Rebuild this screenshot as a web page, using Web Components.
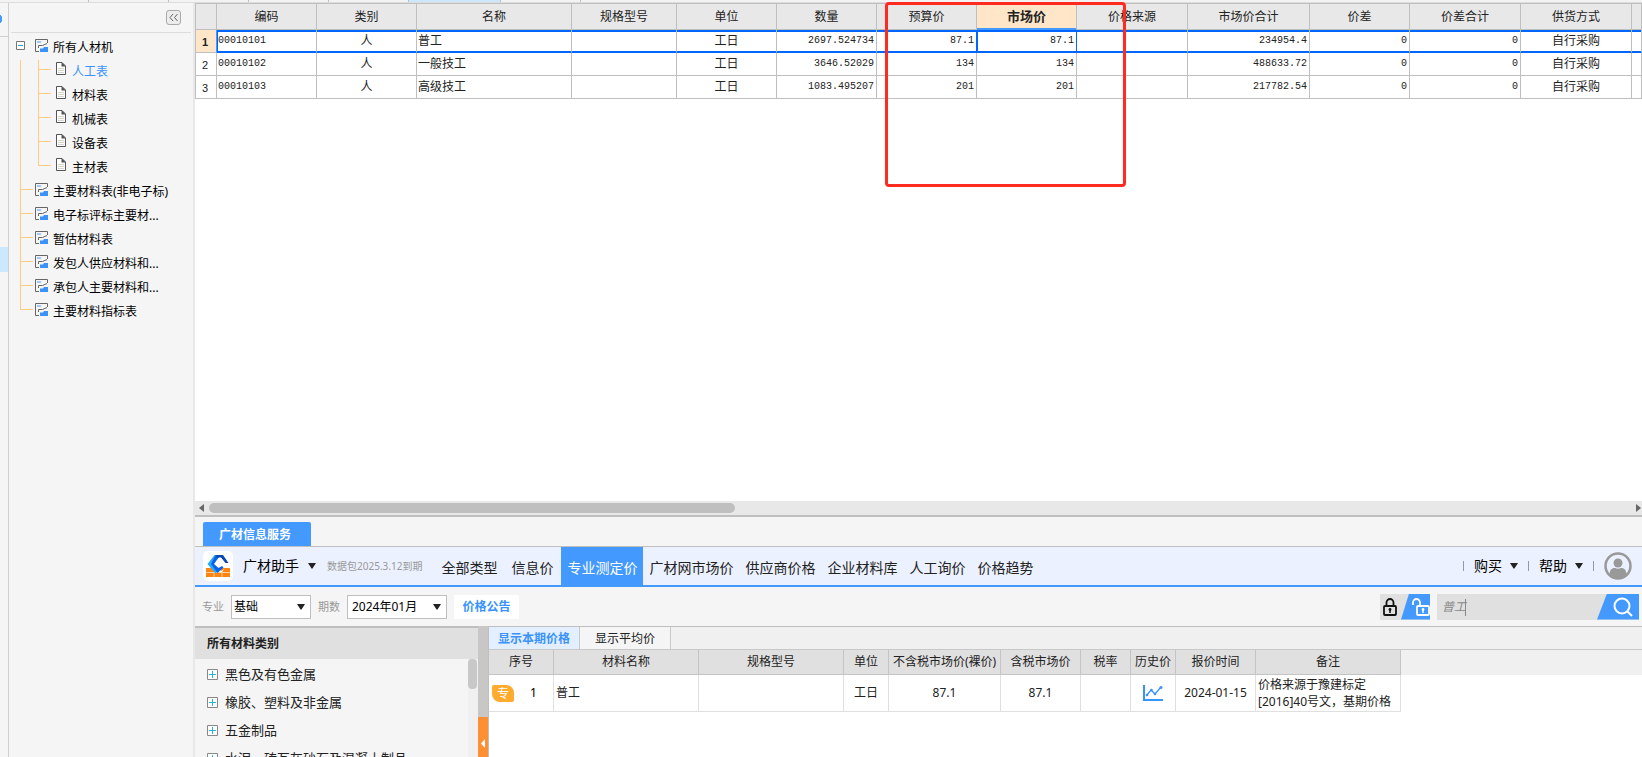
<!DOCTYPE html>
<html lang="zh-CN">
<head>
<meta charset="utf-8">
<title>人材机汇总</title>
<style>
  html, body { margin: 0; height: 100%; }
  body {
    font: 12px/16px "Noto Sans", "Noto Sans CJK SC", sans-serif;
    color: #222;
    background: #f5f5f5;
    overflow: hidden;
  }
</style>
</head>
<body>
<cost-app></cost-app>

<script>
const BASE = `
  * { box-sizing: border-box; }
  button, select, input { font: inherit; color: inherit; margin: 0; border: 0; padding: 0; background: none; border-radius: 0; }
  button { cursor: pointer; }
  svg { display: block; flex: none; }
`;

function define(name, render) {
  customElements.define(name, class extends HTMLElement {
    constructor() {
      super();
      this.attachShadow({ mode: 'open' });
    }
    connectedCallback() {
      const tpl = document.createElement('template');
      const { css, html } = render(this);
      tpl.innerHTML = `<style>${BASE}${css}</style>${html}`;
      this.shadowRoot.replaceChildren(tpl.content.cloneNode(true));
    }
  });
}

/* Strip of window tabs along the upper edge */
define('tab-strip', () => ({
  css: `
    :host { display: flex; height: 3px; background: #f3f3f3; border-bottom: 1px solid #dcdcdc; }
    i { width: 80px; border-right: 1px solid #bfbfbf; }
    i.first { width: 89px; }
    i.on { width: 92px; background: #cce8ff; }
  `,
  html: `<i class="first"></i><i></i><i></i><i></i><i></i><i class="on"></i><i></i>`
}));

/* Narrow rail at the far left */
define('side-rail', () => ({
  css: `
    :host { display: flex; flex-direction: column; width: 9px; flex: none; border-right: 1px solid #cfcfcf; background: #f5f5f5; }
    .top { height: 34px; border-bottom: 1px solid #cfcfcf; display: flex; align-items: center; }
    .top svg { margin-top: -2px; }
    .mark { margin-top: 210px; height: 25px; background: #cce8ff; }
  `,
  html: `<div class="top"><svg width="2" height="10" viewBox="0 0 2 10"><path d="M0 1a5 5 0 0 1 0 8z" fill="#49f" stroke="#49f"/></svg></div><div class="mark"></div>`
}));

/* Tree of price tables */
define('tree-node', host => {
  const level = host.getAttribute('level');
  const chart = `<svg width="13" height="13" viewBox="0 0 13 13">
    <path d="M12.5 4V.5H.5v12H4" fill="none" stroke="#666"/>
    <path d="M2 2h4v2H2z" fill="#9cc8ff"/>
    <path d="M3.500 9V6.500h4L12 4.500" fill="none" stroke="#666"/>
    <path d="M5 9.500h3l1-1.500h4v5H5z" fill="#3a93fb"/></svg>`;
  const file = `<svg width="10" height="13" viewBox="0 0 10 13">
    <path d="M.5.5h5.500l3.500 3.500v8.500H.5z" fill="#fff" stroke="#555"/>
    <path d="M5.500 0L10 4.500H5.500z" fill="#555"/><path d="M2 6.500h6M2 8.500h6M2 10.500h6" stroke="#d4d4d4"/></svg>`;
  return {
    css: `
      :host { display: flex; align-items: center; height: 24px; color: #000; --line: #ffcc80; }
      :host([active]) { color: #3a93fb; }
      .lead { align-self: stretch; flex: none; position: relative; }
      .l0 { width: 26px; display: flex; align-items: center; padding: 0 0 6px 7px; }
      .l1 { width: 26px; }
      .l2 { width: 47px; }
      .v, .h { position: absolute; background: var(--line); }
      .v { width: 1px; left: 11px; top: 0; bottom: 0; }
      .h { height: 1px; left: 11px; width: 13px; top: 9px; }
      .l2 .v + .v, .l2 .h { left: 29px; }
      :host([last]) .v:nth-last-of-type(2) { bottom: auto; height: 9px; }
      .icon { margin-bottom: 6px; }
      .l2 + .icon { margin-bottom: 8px; }
      a { color: inherit; text-decoration: none; margin-left: 5px; white-space: nowrap; }
      .l2 ~ a { margin-left: 6px; }
    `,
    html: `<span class="lead l${level}">${
      level === '0' ? `<svg width="9" height="9" viewBox="0 0 9 9"><path d="M.5.5h8v8h-8z" fill="#fff" stroke="#777"/><path d="M2 4.500h5" stroke="#29a6d6"/></svg>`
      : level === '1' ? `<b class="v"></b><b class="h"></b>`
      : `<b class="v"></b><b class="v"></b><b class="h"></b>`
    }</span><span class="icon">${level === '2' ? file : chart}</span><a href="#"><slot></slot></a>`
  };
});

define('tree-panel', () => ({
  css: `
    :host { display: flex; flex-direction: column; width: 186px; flex: none; background: #f5f5f5; border-right: 2px solid #e8e8e8; }
    header { display: flex; justify-content: flex-end; align-items: center; height: 30px; margin: 0 2px; padding-right: 10px; border-bottom: 1px solid #dcdcdc; }
    button { width: 15px; height: 15px; border: 1px solid #aaa; border-radius: 3px; background: #ececec; display: grid; place-items: center; }
    nav { padding-top: 3px; }
  `,
  html: `<header><button aria-label="收起"><svg width="11" height="9" viewBox="0 0 11 9"><path d="M5 1L2 4.500L5 8M9.500 1l-3 3.500l3 3.500" fill="none" stroke="#666"/></svg></button></header>
  <nav>
    <tree-node level="0">所有人材机</tree-node>
    <tree-node level="2" active>人工表</tree-node>
    <tree-node level="2">材料表</tree-node>
    <tree-node level="2">机械表</tree-node>
    <tree-node level="2">设备表</tree-node>
    <tree-node level="2" last>主材表</tree-node>
    <tree-node level="1">主要材料表(非电子标)</tree-node>
    <tree-node level="1">电子标评标主要材...</tree-node>
    <tree-node level="1">暂估材料表</tree-node>
    <tree-node level="1">发包人供应材料和...</tree-node>
    <tree-node level="1">承包人主要材料和...</tree-node>
    <tree-node level="1" last>主要材料指标表</tree-node>
  </nav>`
}));

/* Main price grid */
const GRID_COLS = [['', 21], ['编码', 100], ['类别', 100], ['名称', 155], ['规格型号', 105], ['单位', 100], ['数量', 100], ['预算价', 100], ['市场价', 100], ['价格来源', 111], ['市场价合计', 122], ['价差', 100], ['价差合计', 111], ['供货方式', 111]];
const GRID_ROWS = [
  ['1', '00010101', '人', '普工', '', '工日', '2697.524734', '87.1', '87.1', '', '234954.4', '0', '0', '自行采购'],
  ['2', '00010102', '人', '一般技工', '', '工日', '3646.52029', '134', '134', '', '488633.72', '0', '0', '自行采购'],
  ['3', '00010103', '人', '高级技工', '', '工日', '1083.495207', '201', '201', '', '217782.54', '0', '0', '自行采购']
];
const GRID_KIND = ['n', 'code', '', 'left', '', '', 'num', 'num', 'num', '', 'num', 'num', 'num', ''];

define('price-grid', () => ({
  css: `
    :host { display: block; flex: 1; min-height: 0; overflow: hidden; background: #fff; border-top: 1px solid #bfbfbf;
      font-family: "Noto Sans CJK SC", sans-serif; }
    table { table-layout: fixed; width: 100%; border-collapse: separate; border-spacing: 0; border-left: 1px solid #bfbfbf; }
    th, td { padding: 0 2px; border: 1px solid #bfbfbf; border-width: 0 1px 1px 0; text-align: center; font-weight: 400; white-space: nowrap; line-height: 16px; overflow: hidden; }
    thead th { height: 26px; background: #e8e8e8; padding-bottom: 2px; }
    tbody th, td { height: 23px; padding-bottom: 2px; }
    td.num, td.code { font: 10px/16px "Liberation Mono", monospace; padding-bottom: 0; }
    td.num { text-align: right; }
    td.code, td.left { text-align: left; padding-left: 1px; }
    tbody th { font: 11px/16px "Liberation Sans", sans-serif; padding: 2px 2px 0 0; }
    thead th.sel { background: #ffe6c8; font-weight: 700; font-size: 13px; box-shadow: inset 0 -1px #49f; border-bottom-color: #49f; }
    tr.sel { --b: #0066ff; }
    tr.sel th { background: #ffe6c8; font-weight: 700; border-right-color: #49f; }
    tr.sel td { border-bottom-color: var(--b); box-shadow: inset 0 2px var(--b), inset 0 -1px var(--b); }
    tr.sel .code, tr.sel .c8 { box-shadow: inset 0 2px var(--b), inset 0 -1px var(--b), inset 1px 0 var(--b); }
    tr.sel .c7, tr.sel .c8 { border-right-color: var(--b); }
  `,
  html: `<table>
    <colgroup>${GRID_COLS.map(c => `<col style="width:${c[1]}px">`).join('')}<col></colgroup>
    <thead><tr>${GRID_COLS.map((c, i) => `<th scope="col" class="${i === 8 ? 'sel' : ''}">${c[0]}</th>`).join('')}<th></th></tr></thead>
    <tbody>${GRID_ROWS.map((r, n) => `<tr class="${n ? '' : 'sel'}">${r.map((v, i) =>
      i ? `<td class="${GRID_KIND[i]} c${i}">${v}</td>` : `<th scope="row">${v}</th>`).join('')}<td></td></tr>`).join('')}</tbody>
  </table>`
}));

define('scroll-track', () => ({
  css: `
    :host { display: flex; align-items: center; height: 16px; flex: none; background: #e8e8e8; border-bottom: 2px solid #bfbfbf; padding: 0 1px 0 4px; }
    .track { flex: 1; margin: 0 5px; }
    .thumb { width: 37%; height: 10px; border-radius: 5px; background: #bfbfbf; }
  `,
  html: `<svg width="5" height="8" viewBox="0 0 5 8"><path d="M5 0v8L0 4z" fill="#666"/></svg><div class="track"><div class="thumb"></div></div><svg width="5" height="8" viewBox="0 0 5 8"><path d="M0 0v8l5-4z" fill="#666"/></svg>`
}));

const CARET = `<svg class="caret" width="8" height="6" viewBox="0 0 8 6"><path d="M0 0h8L4.500 5.500h-1z" fill="#222"/></svg>`;

/* Brand and navigation bar */
define('service-nav', () => ({
  css: `
    :host { display: flex; align-items: center; height: 40px; background: #ebf1ff; border-bottom: 2px solid #49f; padding: 0 10px 0 8px; font-size: 14px; line-height: 20px; white-space: nowrap; }
    .logo { background: #fff; border-radius: 5px; }
    .menu { display: flex; align-items: center; gap: 8px; color: #000; line-height: 20px; }
    .brand { margin-left: 10px; gap: 9px; }
    small { font-size: 10px; line-height: 16px; color: #999; margin: 0 13px 0 11px; }
    nav { display: flex; align-self: stretch; flex: 1; }
    a { color: inherit; text-decoration: none; padding: 11px 6px 0; }
    a:nth-child(-n+2) { margin-right: 2px; }
    a.on { background: #49f; color: #fff; }
    .right { display: flex; align-items: center; gap: 10px; }
    .right i { width: 1px; height: 10px; background: #999; }
  `,
  html: `
    <svg class="logo" width="30" height="30" viewBox="0 0 30 30">
      <path d="M3 17h5l4 4h7l3-4h5v9H3z" fill="#ff8412"/>
      <path d="M3 21.500h24M11 21v5M19 21v5" stroke="#ffe3c8" stroke-width=".8"/>
      <path d="M18 20l-2-3h7z" fill="#ff8412"/>
      <path d="M11.500 4h4l-6.500 9 5.500 8-2.500 1-7.500-9z" fill="#23aef5"/>
      <path d="M12.500 4h5l-6.500 9 4.500 4 3.500-2 1.500 1.500-6 5.500-6.500-9z" fill="#0a62ec"/>
      <path d="M14 4h6l5.500 8h-3L18 6.500h-5z" fill="#0a48b0"/>
    </svg>
    <button class="menu brand">广材助手 ${CARET}</button>
    <small>数据包2025.3.12到期</small>
    <nav><a href="#">全部类型</a><a href="#">信息价</a><a href="#" class="on">专业测定价</a><a href="#">广材网市场价</a><a href="#">供应商价格</a><a href="#">企业材料库</a><a href="#">人工询价</a><a href="#">价格趋势</a></nav>
    <div class="right"><i></i><button class="menu">购买 ${CARET}</button><i></i><button class="menu">帮助 ${CARET}</button><i></i>
      <svg width="28" height="28" viewBox="0 0 28 28"><circle cx="14" cy="14" r="12.500" fill="#ebf1ff" stroke="#999" stroke-width="2.500"/><circle cx="14" cy="11" r="4.500" fill="#999"/><path d="M5.500 22.500c0-5 3-7 5.500-6.500q3 1.500 6 0c2.500-.5 5.500 1.500 5.500 6.500a12 12 0 0 1-17 0z" fill="#999"/></svg>
    </div>`
}));

define('drop-down', host => ({
  css: `
    :host { display: block; position: relative; height: 24px; background: #fff; border: 1px solid #bfbfbf; }
    select { appearance: none; width: 100%; height: 100%; padding-left: var(--inset, 2px); color: #000; }
    .caret { position: absolute; right: 5px; top: 8px; pointer-events: none; }
  `,
  html: `<select aria-label="${host.getAttribute('label')}"><option>${host.getAttribute('value')}</option></select>${CARET}`
}));

define('filter-bar', () => ({
  css: `
    :host { display: flex; align-items: center; height: 39px; padding: 0 3px 0 7px; }
    .cap { font-size: 11px; color: #999; width: 22px; }
    drop-down { width: 80px; margin: 0 7px; }
    drop-down.wide { width: 100px; --inset: 4px; }
    .notice { height: 24px; width: 65px; background: #fff; color: #3a93fb; font-weight: 700; }
    .fill { flex: 1; }
    .locks { display: flex; width: 50px; height: 26px; background: #e0e0e0; margin-right: 7px; }
    .locks button { height: 26px; display: flex; align-items: center; }
    .shut { width: 21px; padding-left: 3px; }
    .open { width: 29px; background: #49f; clip-path: polygon(8px 0, 100% 0, 100% 100%, 0 100%); padding-left: 11px; }
    .search { display: flex; position: relative; width: 202px; height: 26px; background: #e0e0e0; }
    input { flex: 1; min-width: 0; padding-left: 5px; font-size: 12px; font-style: italic; color: #888; outline: none; }
    .cursor { position: absolute; left: 28px; top: 5px; width: 1px; height: 17px; background: #888; }
    .go { width: 42px; background: #49f; clip-path: polygon(10px 0, 100% 0, 100% 100%, 0 100%); padding-left: 16px; }
  `,
  html: `
    <span class="cap">专业</span><drop-down label="专业" value="基础"></drop-down>
    <span class="cap">期数</span><drop-down class="wide" label="期数" value="2024年01月"></drop-down>
    <button class="notice">价格公告</button>
    <span class="fill"></span>
    <div class="locks">
      <button class="shut" aria-label="锁定"><svg width="14" height="18" viewBox="0 0 14 18"><path d="M3.500 8V4.500a3.500 3.500 0 0 1 7 0V8" fill="none" stroke="#111" stroke-width="1.800"/><rect x="1" y="8" width="12" height="9" rx="1" fill="none" stroke="#111" stroke-width="1.800"/><path d="M7 11v4" stroke="#111" stroke-width="1.500"/><circle cx="7" cy="11.500" r="1.400" fill="#111"/></svg></button>
      <button class="open" aria-label="解锁"><svg width="18" height="18" viewBox="0 0 18 18"><path d="M1 7V4.500a3.500 3.500 0 0 1 7 0V8" fill="none" stroke="#fff" stroke-width="1.800"/><rect x="5" y="8" width="12" height="9" rx="1" fill="none" stroke="#fff" stroke-width="1.800"/><path d="M11 11v4" stroke="#fff" stroke-width="1.500"/><circle cx="11" cy="11.500" r="1.400" fill="#fff"/></svg></button>
    </div>
    <div class="search"><input type="text" aria-label="搜索" value="普工"><span class="cursor"></span>
      <button class="go" aria-label="搜索"><svg width="20" height="20" viewBox="0 0 20 20"><circle cx="9" cy="9" r="7.500" fill="none" stroke="#fff" stroke-width="2"/><path d="M14.500 14.500L19 19" stroke="#fff" stroke-width="2"/></svg></button></div>`
}));

/* Category list */
define('category-list', () => ({
  css: `
    :host { display: flex; flex-direction: column; width: 283px; flex: none; border-top: 2px solid #bfbfbf; }
    h2 { margin: 0; height: 31px; background: #e0e0e0; font-size: 12px; line-height: 31px; padding-left: 12px; flex: none; }
    .body { display: flex; flex: 1; min-height: 0; overflow: hidden; }
    ul { list-style: none; margin: 0; padding: 1px 0 0 12px; flex: 1; font-size: 13px; }
    li { display: flex; align-items: center; gap: 7px; height: 28px; }
    .track { width: 10px; background: #f0f0f0; }
    .thumb { width: 9px; height: 30px; border-radius: 4px; background: #c8c8c8; }
  `,
  html: `<h2>所有材料类别</h2><div class="body"><ul>${['黑色及有色金属', '橡胶、塑料及非金属', '五金制品', '水泥、砖瓦灰砂石及混凝土制品'].map(t =>
    `<li><svg width="11" height="11" viewBox="0 0 11 11"><path d="M.5.5h10v10H.5z" fill="#fff" stroke="#888"/><path d="M2 5.500h7M5.500 2v7" stroke="#29b6d6"/></svg>${t}</li>`).join('')}</ul><div class="track"><div class="thumb"></div></div></div>`
}));

define('pane-splitter', () => ({
  css: `
    :host { display: flex; flex-direction: column; justify-content: flex-end; width: 10px; flex: none; background: #c8c7c5; }
    button { height: 40px; width: 10px; background: #ff8f33; display: flex; align-items: center; padding: 12px 0 0 3px; }
  `,
  html: `<button aria-label="收起类别"><svg width="4" height="9" viewBox="0 0 4 9"><path d="M4 0v9L0 4.500z" fill="#fff"/></svg></button>`
}));

/* Quotation table */
const QUOTE_COLS = [['序号', 65], ['材料名称', 145], ['规格型号', 145], ['单位', 45], ['不含税市场价(裸价)', 112], ['含税市场价', 80], ['税率', 50], ['历史价', 45], ['报价时间', 80], ['备注', 145]];

define('quote-table', () => ({
  css: `
    :host { display: flex; flex-direction: column; flex: 1; min-width: 0; background: #fff; border: 1px solid #bfbfbf; border-width: 1px 0 0 1px; }
    .tabs { display: flex; height: 23px; flex: none; background: #f0f0f0; border-bottom: 1px solid #c8c8c8; }
    .tabs button { width: 91px; border-right: 1px solid #c8c8c8; background: #f5f5f5; padding-top: 2px; }
    .tabs .on { background: #e3eeff; color: #3a93fb; font-weight: 700; }
    .wrap { background: linear-gradient(#f0f0f0 25px, #fff 25px); }
    table { table-layout: fixed; width: 912px; border-collapse: separate; border-spacing: 0; }
    th, td { padding: 0; text-align: center; font-weight: 400; border: 0 solid #e0e0e0; border-width: 0 1px 1px 0; white-space: nowrap; }
    th { height: 25px; background: #e0e0e0; border-color: #c4c4c4; }
    td { height: 37px; }
    .name, .note { text-align: left; padding-left: 2px; }
    .note { line-height: 17px; }
    .seq { display: flex; align-items: center; gap: 16px; padding-left: 3px; color: #000; }
    .badge { width: 22px; height: 17px; background: #ffab2e; color: #fff; border-radius: 2px 8px 2px 8px; line-height: 17px; }
    td svg { margin: 0 auto; }
  `,
  html: `<div class="tabs"><button class="on">显示本期价格</button><button>显示平均价</button></div>
  <div class="wrap"><table>
    <colgroup>${QUOTE_COLS.map(c => `<col style="width:${c[1]}px">`).join('')}</colgroup>
    <thead><tr>${QUOTE_COLS.map(c => `<th scope="col">${c[0]}</th>`).join('')}</tr></thead>
    <tbody><tr><td><div class="seq"><span class="badge">专</span>1</div></td><td class="name">普工</td><td></td><td>工日</td><td>87.1</td><td>87.1</td><td></td>
      <td><svg width="20" height="16" viewBox="0 0 20 16"><path d="M1 0v15h19" fill="none" stroke="#3a93fb" stroke-width="2"/><path d="M4 10l4-5 4 4 6-7" fill="none" stroke="#3a93fb" stroke-width="1.300"/><g fill="#3a93fb"><circle cx="4" cy="10" r="1.300"/><circle cx="8.500" cy="5" r="1.300"/><circle cx="12" cy="9" r="1.300"/><circle cx="18" cy="2.500" r="1.500"/></g></svg></td>
      <td>2024-01-15</td><td class="note">价格来源于豫建标定<br>[2016]40号文，基期价格</td></tr></tbody>
  </table></div>`
}));

define('service-panel', () => ({
  css: `
    :host { display: flex; flex-direction: column; flex: 0 0 240px; min-height: 0; overflow: hidden; background: #f5f5f5; }
    .tabs { display: flex; align-items: flex-end; height: 30px; flex: none; padding-left: 8px; border-bottom: 1px solid #bfbfbf; }
    .tabs button { width: 108px; height: 24px; background: #49f; color: #fff; font-weight: 700; border-radius: 2px 2px 0 0; padding: 2px 4px 0 0; }
    service-nav, filter-bar { flex: none; }
    .split { display: flex; flex: 1; min-height: 0; }
  `,
  html: `<div class="tabs"><button>广材信息服务</button></div>
    <service-nav></service-nav><filter-bar></filter-bar>
    <div class="split"><category-list></category-list><pane-splitter></pane-splitter><quote-table></quote-table></div>`
}));

/* Highlight frame drawn over the two price columns */
define('mark-frame', () => ({
  css: `
    :host { position: absolute; box-sizing: border-box; left: 690px; top: -1px; width: 241px; height: 185px; border: 3px solid #ff2a20; border-radius: 4px; pointer-events: none; }
  `,
  html: ``
}));

define('cost-app', () => ({
  css: `
    :host { display: flex; flex-direction: column; height: 100vh; }
    .row { display: flex; flex: 1; min-height: 0; }
    main { position: relative; display: flex; flex-direction: column; flex: 1; min-width: 0; }
  `,
  html: `<tab-strip></tab-strip>
    <div class="row"><side-rail></side-rail><tree-panel></tree-panel>
      <main><price-grid></price-grid><scroll-track></scroll-track><service-panel></service-panel><mark-frame></mark-frame></main></div>`
}));
</script>
</body>
</html>
